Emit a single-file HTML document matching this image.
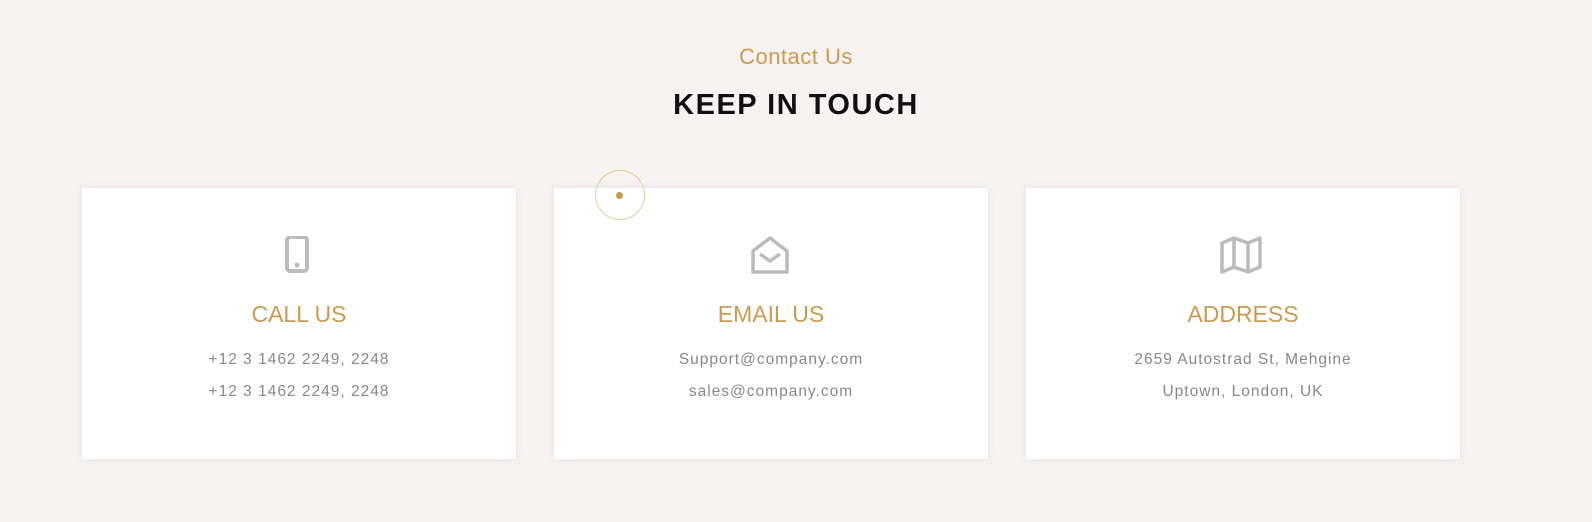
<!DOCTYPE html>
<html><head><style>
body{margin:0;width:1592px;height:522px;background:#f7f3f2;font-family:"Liberation Sans",sans-serif;position:relative;overflow:hidden}
.sub{position:absolute;top:44px;left:0;width:1592px;text-align:center;color:#cc9a4f;font-size:22px;letter-spacing:0.5px}
.h{position:absolute;top:89px;left:0;width:1592px;text-align:center;color:#111;font-size:29px;font-weight:bold;letter-spacing:1.5px}
.card{position:absolute;top:188px;width:434px;height:271px;background:#fff;box-shadow:0 0 8px rgba(0,0,0,.08);text-align:center}
.card svg{position:absolute;top:48px;left:197px}
.t{position:absolute;top:113px;width:100%;color:#cc9a4f;font-size:23px}
.l{position:absolute;width:100%;color:#888;font-size:15.5px;letter-spacing:1px}
.circ{position:absolute;left:595px;top:170px;width:48px;height:48px;border:1px solid #e6c79a;border-radius:50%}
.dot{position:absolute;left:616px;top:192px;width:7px;height:7px;background:#cc9a4f;border-radius:50%}
</style></head><body>
<div class="sub">Contact Us</div>
<div class="h">KEEP IN TOUCH</div>
<div class="card" style="left:82px">
<svg width="40" height="40" viewBox="0 0 40 40"><rect x="8" y="1" width="20" height="34" rx="3" fill="none" stroke="#bbb" stroke-width="4"/><circle cx="18" cy="29" r="2.5" fill="#bbb"/></svg>
<div class="t">CALL US</div>
<div class="l" style="top:163px">+12 3 1462 2249, 2248</div>
<div class="l" style="top:195px">+12 3 1462 2249, 2248</div>
</div>
<div class="card" style="left:554px">
<svg width="40" height="40" viewBox="0 0 40 40"><path d="M2 15 L19 2 L36 15 V36 H2 Z" fill="none" stroke="#bbb" stroke-width="3.5" stroke-linejoin="round"/><path d="M9 18 L19 25 L29 18" fill="none" stroke="#bbb" stroke-width="3.5"/></svg>
<div class="t">EMAIL US</div>
<div class="l" style="top:163px">Support@company.com</div>
<div class="l" style="top:195px">sales@company.com</div>
</div>
<div class="card" style="left:1026px">
<svg width="46" height="40" viewBox="0 0 46 40" style="left:194px"><path d="M2 7 L14 2 L28 7 L40 2 V31 L28 36 L14 31 L2 36 Z M14 2 V31 M28 7 V36" fill="none" stroke="#bbb" stroke-width="3.5" stroke-linejoin="round"/></svg>
<div class="t">ADDRESS</div>
<div class="l" style="top:163px">2659 Autostrad St, Mehgine</div>
<div class="l" style="top:195px">Uptown, London, UK</div>
</div>
<div class="circ"></div><div class="dot"></div>
</body></html>
